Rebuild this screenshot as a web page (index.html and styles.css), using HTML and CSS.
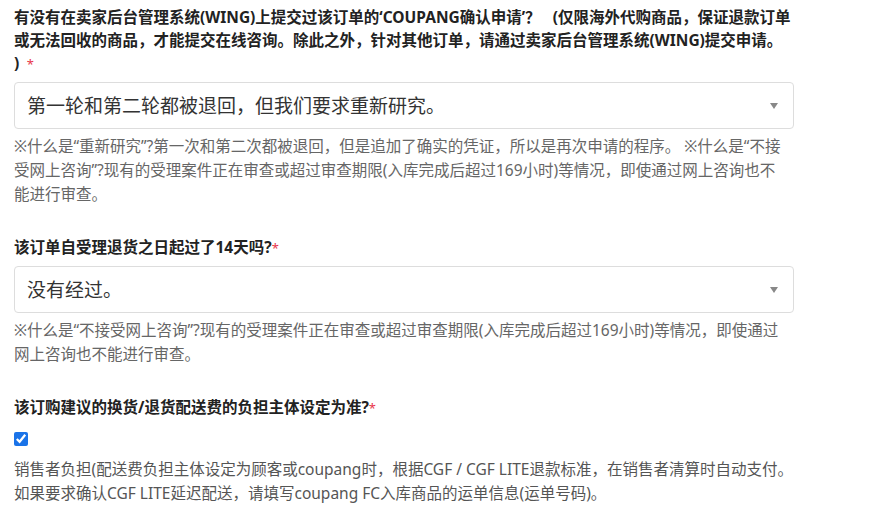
FILE: index.html
```html
<!doctype html>
<html lang="zh-CN">
	<head>
		<meta charset="UTF-8">
		<meta name="viewport" content="width=device-width, initial-scale=1.0">
		<title>在线咨询</title>
		<link rel="stylesheet" href="styles.css">
	</head>
	<body>
		<div class="formulario">

			<div class="grupo">
				<label class="rotulo">有没有在卖家后台管理系统(WING)上提交过该订单的‘COUPANG确认申请’？ &nbsp;&nbsp;(仅限海外代购商品，保证退款订单或无法回收的商品，才能提交在线咨询。除此之外，针对其他订单，请通过卖家后台管理系统(WING)提交申请。<br>) <span class="obrigatorio">&nbsp;*</span></label>
				<div class="caixaSelect">
					<select class="select">
						<option>第一轮和第二轮都被退回，但我们要求重新研究。</option>
					</select>
				</div>
				<p class="ajuda">※什么是“重新研究”?第一次和第二次都被退回，但是追加了确实的凭证，所以是再次申请的程序。 ※什么是“不接受网上咨询”?现有的受理案件正在审查或超过审查期限(入库完成后超过169小时)等情况，即使通过网上咨询也不能进行审查。</p>
			</div>

			<div class="grupo">
				<label class="rotulo">该订单自受理退货之日起过了14天吗?<span class="obrigatorio">*</span></label>
				<div class="caixaSelect">
					<select class="select">
						<option>没有经过。</option>
					</select>
				</div>
				<p class="ajuda">※什么是“不接受网上咨询”?现有的受理案件正在审查或超过审查期限(入库完成后超过169小时)等情况，即使通过网上咨询也不能进行审查。</p>
			</div>

			<div class="grupo">
				<label class="rotulo">该订购建议的换货/退货配送费的负担主体设定为准?<span class="obrigatorio">*</span></label>
				<div class="linhaCheck">
					<input type="checkbox" class="check" checked>
				</div>
				<p class="ajuda escuro">销售者负担(配送费负担主体设定为顾客或coupang时，根据CGF / CGF LITE退款标准，在销售者清算时自动支付。如果要求确认CGF LITE延迟配送，请填写coupang FC入库商品的运单信息(运单号码)。</p>
			</div>

		</div>
	</body>
</html>
```

FILE: styles.css
```css
body{
	margin: 0;
	font-family: "Noto Sans", "Noto Sans CJK SC", sans-serif;
	color: #222;
	background: #fff;
}

.formulario{
	width: 780px;
	padding: 6px 14px;
}

.grupo{
	margin-bottom: 30px;
}

.rotulo{
	display: block;
	font-size: 15.5px;
	font-weight: bold;
	line-height: 23px;
	margin-bottom: 6px;
}

.obrigatorio{
	color: #e8364a;
	font-weight: normal;
	font-size: 13px;
}

.caixaSelect{
	position: relative;
}

.caixaSelect::after{
	content: "";
	position: absolute;
	right: 16px;
	top: 21px;
	border-left: 4px solid transparent;
	border-right: 4px solid transparent;
	border-top: 6px solid #888;
	pointer-events: none;
}

.select{
	-webkit-appearance: none;
	appearance: none;
	width: 100%;
	height: 47px;
	padding: 0 12px;
	font-family: "Noto Sans", "Noto Sans CJK SC", sans-serif;
	font-size: 19px;
	color: #333;
	background: #fff;
	border: 1px solid #ddd;
	border-radius: 4px;
}

.ajuda{
	margin: 5px 0 0 0;
	padding-right: 5px;
	font-size: 15.5px;
	line-height: 24px;
	color: #666;
}

.ajuda.escuro{
	padding-right: 0;
	color: #555;
}

.linhaCheck{
	height: 26px;
	display: flex;
	align-items: center;
}

.check{
	margin: 0;
	width: 14px;
	height: 14px;
	accent-color: #1a73e8;
}
```
